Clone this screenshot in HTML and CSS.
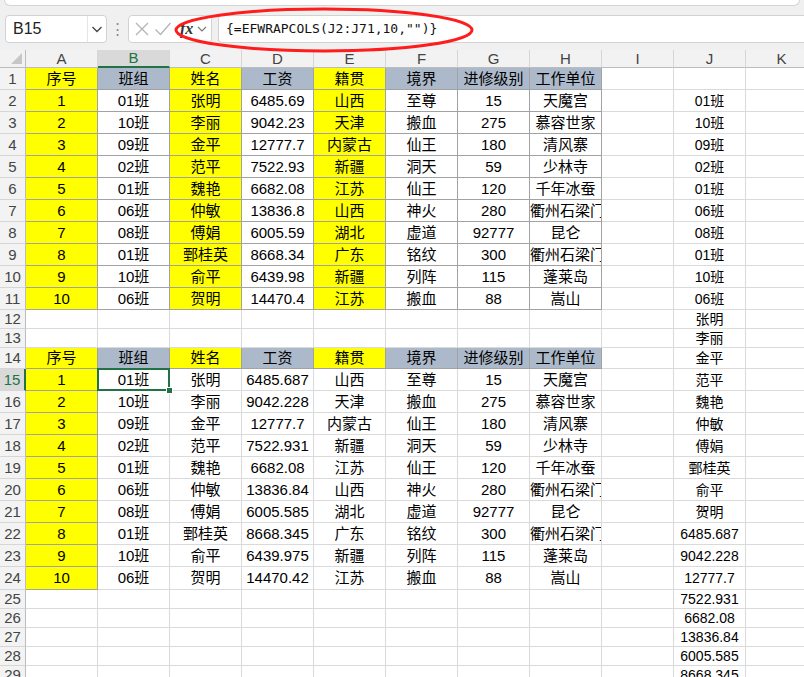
FILE: index.html
```html
<!DOCTYPE html>
<html lang="zh-CN">
<head>
<meta charset="utf-8">
<title>EFWRAPCOLS</title>
<link rel="stylesheet" href="styles.css">
</head>
<body>
<div class="top">
  <div class="ribbon"></div>
  <div class="fbar">
    <div class="namebox">
      <span class="nb-text">B15</span>
      <span class="nb-drop"><svg width="12" height="8" viewBox="0 0 12 8"><path d="M1.5 2 L6 6.5 L10.5 2" fill="none" stroke="#444" stroke-width="1.3"/></svg></span>
    </div>
    <div class="dots">⋮</div>
    <div class="fx-box">
      <svg class="ico" width="16" height="16" viewBox="0 0 16 16"><path d="M2 2 L14 14 M14 2 L2 14" stroke="#b4b4b4" stroke-width="1.3" fill="none"/></svg>
      <svg class="ico" width="18" height="16" viewBox="0 0 18 16"><path d="M1.5 8.5 L6.5 13.5 L16.5 2" stroke="#b4b4b4" stroke-width="1.3" fill="none"/></svg>
      <span class="fx">fx</span>
      <svg class="ico2" width="10" height="8" viewBox="0 0 10 8"><path d="M1 2 L5 6 L9 2" fill="none" stroke="#777" stroke-width="1.1"/></svg>
    </div>
    <div class="formula">{=EFWRAPCOLS(J2:J71,10,"")}</div>
  </div>
  <svg class="circle" width="804" height="60" viewBox="0 0 804 60"><ellipse cx="324" cy="30" rx="148" ry="21" fill="none" stroke="#ff1c1c" stroke-width="3"/></svg>
</div>

<table class="sheet">
  <colgroup><col class="c0"><col class="cc"><col class="cc"><col class="cc"><col class="cc"><col class="cc"><col class="cc"><col class="cc"><col class="cc"><col class="cc"><col class="cc"><col class="cc"></colgroup>
  <tr class="hh"><th class="corner"><span class="tri"></span></th><th class="ch">A</th><th class="ch act">B</th><th class="ch">C</th><th class="ch">D</th><th class="ch">E</th><th class="ch">F</th><th class="ch">G</th><th class="ch">H</th><th class="ch">I</th><th class="ch">J</th><th class="ch">K</th></tr>

  <tr class="r22"><th class="rh">1</th><td class="y b">序号</td><td class="g b">班组</td><td class="y b">姓名</td><td class="g b">工资</td><td class="y b">籍贯</td><td class="g b">境界</td><td class="g b">进修级别</td><td class="g b">工作单位</td><td></td><td class="j"></td><td></td></tr>
  <tr class="r22"><th class="rh">2</th><td class="y b">1</td><td class="b">01班</td><td class="y b">张明</td><td class="b">6485.69</td><td class="y b">山西</td><td class="b">至尊</td><td class="b">15</td><td class="b">天魔宫</td><td></td><td class="j">01班</td><td></td></tr>
  <tr class="r22"><th class="rh">3</th><td class="y b">2</td><td class="b">10班</td><td class="y b">李丽</td><td class="b">9042.23</td><td class="y b">天津</td><td class="b">搬血</td><td class="b">275</td><td class="b">慕容世家</td><td></td><td class="j">10班</td><td></td></tr>
  <tr class="r22"><th class="rh">4</th><td class="y b">3</td><td class="b">09班</td><td class="y b">金平</td><td class="b">12777.7</td><td class="y b">内蒙古</td><td class="b">仙王</td><td class="b">180</td><td class="b">清风寨</td><td></td><td class="j">09班</td><td></td></tr>
  <tr class="r22"><th class="rh">5</th><td class="y b">4</td><td class="b">02班</td><td class="y b">范平</td><td class="b">7522.93</td><td class="y b">新疆</td><td class="b">洞天</td><td class="b">59</td><td class="b">少林寺</td><td></td><td class="j">02班</td><td></td></tr>
  <tr class="r22"><th class="rh">6</th><td class="y b">5</td><td class="b">01班</td><td class="y b">魏艳</td><td class="b">6682.08</td><td class="y b">江苏</td><td class="b">仙王</td><td class="b">120</td><td class="b">千年冰蚕</td><td></td><td class="j">01班</td><td></td></tr>
  <tr class="r22"><th class="rh">7</th><td class="y b">6</td><td class="b">06班</td><td class="y b">仲敏</td><td class="b">13836.8</td><td class="y b">山西</td><td class="b">神火</td><td class="b">280</td><td class="b">衢州石梁门</td><td></td><td class="j">06班</td><td></td></tr>
  <tr class="r22"><th class="rh">8</th><td class="y b">7</td><td class="b">08班</td><td class="y b">傅娟</td><td class="b">6005.59</td><td class="y b">湖北</td><td class="b">虚道</td><td class="b">92777</td><td class="b">昆仑</td><td></td><td class="j">08班</td><td></td></tr>
  <tr class="r22"><th class="rh">9</th><td class="y b">8</td><td class="b">01班</td><td class="y b">鄄桂英</td><td class="b">8668.34</td><td class="y b">广东</td><td class="b">铭纹</td><td class="b">300</td><td class="b">衢州石梁门</td><td></td><td class="j">01班</td><td></td></tr>
  <tr class="r22"><th class="rh">10</th><td class="y b">9</td><td class="b">10班</td><td class="y b">俞平</td><td class="b">6439.98</td><td class="y b">新疆</td><td class="b">列阵</td><td class="b">115</td><td class="b">蓬莱岛</td><td></td><td class="j">10班</td><td></td></tr>
  <tr class="r22"><th class="rh">11</th><td class="y b">10</td><td class="b">06班</td><td class="y b">贺明</td><td class="b">14470.4</td><td class="y b">江苏</td><td class="b">搬血</td><td class="b">88</td><td class="b">嵩山</td><td></td><td class="j">06班</td><td></td></tr>

  <tr class="r19"><th class="rh">12</th><td></td><td></td><td></td><td></td><td></td><td></td><td></td><td></td><td></td><td class="j">张明</td><td></td></tr>
  <tr class="r19"><th class="rh">13</th><td></td><td></td><td></td><td></td><td></td><td></td><td></td><td></td><td></td><td class="j">李丽</td><td></td></tr>

  <tr class="r21"><th class="rh">14</th><td class="y b">序号</td><td class="g b">班组</td><td class="y b">姓名</td><td class="g b">工资</td><td class="y b">籍贯</td><td class="g b">境界</td><td class="g b">进修级别</td><td class="g b">工作单位</td><td></td><td class="j">金平</td><td></td></tr>
  <tr class="r22"><th class="rh act">15</th><td class="y b">1</td><td class="sel">01班<span class="handle"></span></td><td>张明</td><td>6485.687</td><td>山西</td><td>至尊</td><td>15</td><td>天魔宫</td><td></td><td class="j">范平</td><td></td></tr>
  <tr class="r22"><th class="rh">16</th><td class="y b">2</td><td>10班</td><td>李丽</td><td>9042.228</td><td>天津</td><td>搬血</td><td>275</td><td>慕容世家</td><td></td><td class="j">魏艳</td><td></td></tr>
  <tr class="r22"><th class="rh">17</th><td class="y b">3</td><td>09班</td><td>金平</td><td>12777.7</td><td>内蒙古</td><td>仙王</td><td>180</td><td>清风寨</td><td></td><td class="j">仲敏</td><td></td></tr>
  <tr class="r22"><th class="rh">18</th><td class="y b">4</td><td>02班</td><td>范平</td><td>7522.931</td><td>新疆</td><td>洞天</td><td>59</td><td>少林寺</td><td></td><td class="j">傅娟</td><td></td></tr>
  <tr class="r22"><th class="rh">19</th><td class="y b">5</td><td>01班</td><td>魏艳</td><td>6682.08</td><td>江苏</td><td>仙王</td><td>120</td><td>千年冰蚕</td><td></td><td class="j">鄄桂英</td><td></td></tr>
  <tr class="r22"><th class="rh">20</th><td class="y b">6</td><td>06班</td><td>仲敏</td><td>13836.84</td><td>山西</td><td>神火</td><td>280</td><td>衢州石梁门</td><td></td><td class="j">俞平</td><td></td></tr>
  <tr class="r22"><th class="rh">21</th><td class="y b">7</td><td>08班</td><td>傅娟</td><td>6005.585</td><td>湖北</td><td>虚道</td><td>92777</td><td>昆仑</td><td></td><td class="j">贺明</td><td></td></tr>
  <tr class="r22"><th class="rh">22</th><td class="y b">8</td><td>01班</td><td>鄄桂英</td><td>8668.345</td><td>广东</td><td>铭纹</td><td>300</td><td>衢州石梁门</td><td></td><td class="j">6485.687</td><td></td></tr>
  <tr class="r22"><th class="rh">23</th><td class="y b">9</td><td>10班</td><td>俞平</td><td>6439.975</td><td>新疆</td><td>列阵</td><td>115</td><td>蓬莱岛</td><td></td><td class="j">9042.228</td><td></td></tr>
  <tr class="r23"><th class="rh">24</th><td class="y b">10</td><td>06班</td><td>贺明</td><td>14470.42</td><td>江苏</td><td>搬血</td><td>88</td><td>嵩山</td><td></td><td class="j">12777.7</td><td></td></tr>

  <tr class="r19"><th class="rh">25</th><td></td><td></td><td></td><td></td><td></td><td></td><td></td><td></td><td></td><td class="j">7522.931</td><td></td></tr>
  <tr class="r19"><th class="rh">26</th><td></td><td></td><td></td><td></td><td></td><td></td><td></td><td></td><td></td><td class="j">6682.08</td><td></td></tr>
  <tr class="r19"><th class="rh">27</th><td></td><td></td><td></td><td></td><td></td><td></td><td></td><td></td><td></td><td class="j">13836.84</td><td></td></tr>
  <tr class="r19"><th class="rh">28</th><td></td><td></td><td></td><td></td><td></td><td></td><td></td><td></td><td></td><td class="j">6005.585</td><td></td></tr>
  <tr class="r19"><th class="rh">29</th><td></td><td></td><td></td><td></td><td></td><td></td><td></td><td></td><td></td><td class="j">8668.345</td><td></td></tr>
</table>
</body>
</html>
```

FILE: styles.css
```css
html, body {
  margin: 0;
  padding: 0;
}
body {
  width: 804px;
  height: 677px;
  overflow: hidden;
  background: #ffffff;
  font-family: "Liberation Sans", "Noto Sans CJK SC", sans-serif;
}

/* ---------- top bar ---------- */
.top {
  position: relative;
  height: 50px;
  background: #f0f0f0;
}
.ribbon {
  height: 5px;
  margin: 0 4px;
  background: #ffffff;
  border: 1px solid #d4d4d4;
  border-top: none;
  border-radius: 0 0 6px 6px;
}
.fbar {
  display: flex;
  align-items: center;
  height: 28px;
  margin-top: 9px;
}
.namebox {
  margin-left: 5px;
  width: 102px;
  height: 28px;
  box-sizing: border-box;
  background: #ffffff;
  border: 1px solid #d2d2d2;
  border-radius: 4px;
  display: flex;
  align-items: center;
}
.nb-text {
  flex: 1;
  padding-left: 7px;
  font-size: 16px;
  color: #222;
}
.nb-drop {
  width: 18px;
  height: 26px;
  display: flex;
  align-items: center;
  justify-content: center;
  border-left: 1px solid #e6e6e6;
}
.dots {
  width: 21px;
  text-align: center;
  color: #8a8a8a;
  font-size: 15px;
}
.fx-box {
  width: 84px;
  height: 28px;
  box-sizing: border-box;
  background: #ffffff;
  border: 1px solid #d2d2d2;
  border-radius: 4px;
  display: flex;
  align-items: center;
  padding-left: 5px;
  gap: 4px;
}
.fx {
  font-family: "Liberation Serif", serif;
  font-style: italic;
  font-weight: bold;
  font-size: 16px;
  color: #333;
  margin-left: 4px;
}
.ico2 {
  margin-left: 0;
}
.formula {
  flex: 1;
  margin-left: 6px;
  height: 28px;
  box-sizing: border-box;
  background: #ffffff;
  border: 1px solid #d2d2d2;
  border-right: none;
  border-radius: 4px 0 0 4px;
  padding-left: 7px;
  font-family: "DejaVu Sans Mono", monospace;
  font-size: 13px;
  line-height: 26px;
  color: #111;
  white-space: nowrap;
}
.circle {
  position: absolute;
  left: 0;
  top: 0;
  z-index: 5;
  pointer-events: none;
}

/* ---------- sheet ---------- */
.sheet {
  border-collapse: separate;
  border-spacing: 0;
  table-layout: fixed;
  width: 818px;
}
.c0 { width: 26px; }
.cc { width: 72px; }

.sheet td,
.sheet th {
  box-sizing: border-box;
  padding: 0;
  border-right: 1px solid #dadada;
  border-bottom: 1px solid #dadada;
  text-align: center;
  vertical-align: middle;
  white-space: nowrap;
  overflow: hidden;
  font-weight: normal;
  font-size: 15px;
  line-height: 16px;
  color: #000;
}
.hh th { height: 18px; }
.r23 td, .r23 th { height: 23px; }
.r22 td, .r22 th { height: 22px; }
.r21 td, .r21 th { height: 21px; }
.r19 td, .r19 th { height: 19px; }

.sheet .ch {
  background: #f2f2f2;
  color: #444;
  font-size: 15px;
  border-bottom-color: #bcbcbc;
  border-right-color: #d6d6d6;
}
.sheet .ch.act {
  background: #d9d9d9;
  color: #217346;
  border-bottom: 2px solid #217346;
}
.sheet .corner {
  position: relative;
  background: #f2f2f2;
  border-right-color: #bcbcbc;
  border-bottom-color: #bcbcbc;
}
.tri {
  position: absolute;
  right: 3px;
  bottom: 3px;
  width: 0;
  height: 0;
  border-left: 11px solid transparent;
  border-bottom: 11px solid #c6c6c6;
}
.sheet .rh {
  background: #f3f3f3;
  color: #444;
  font-size: 15px;
  border-right-color: #bcbcbc;
  border-bottom-color: #d6d6d6;
}
.sheet .rh.act {
  background: #d9d9d9;
  color: #217346;
  border-right: 2px solid #217346;
}

.sheet .y { background: #ffff00; }
.sheet .g { background: #acb9ca; }
.sheet .b {
  border-right-color: #a2a2a2;
  border-bottom-color: #a2a2a2;
}
.sheet .j { font-size: 14px; }

.sheet .sel {
  position: relative;
  overflow: visible;
}
.sel::after {
  content: "";
  position: absolute;
  left: -1px;
  top: -1px;
  right: -1px;
  bottom: -1px;
  border: 2px solid #217346;
}
.handle {
  position: absolute;
  right: -4px;
  bottom: -4px;
  width: 5px;
  height: 5px;
  background: #217346;
  border: 1px solid #ffffff;
  z-index: 2;
}
```
